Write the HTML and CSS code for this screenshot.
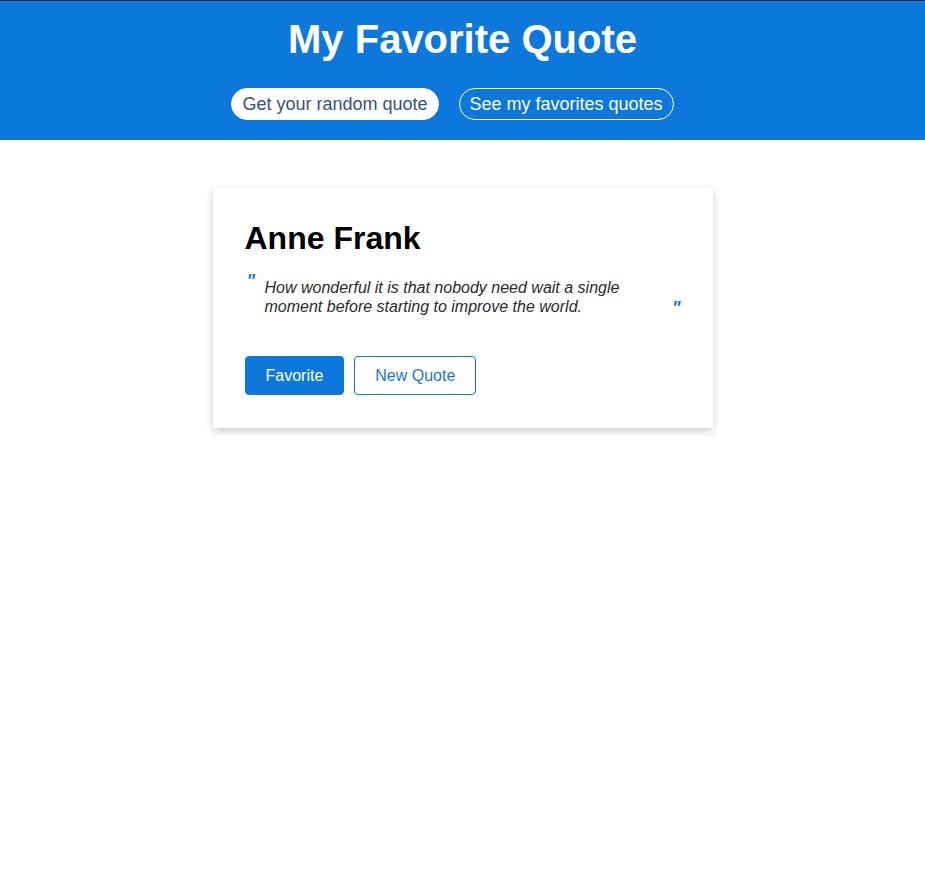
FILE: index.html
```html
<!DOCTYPE html>
<html lang="en">
<head>
<meta charset="utf-8">
<title>My Favorite Quote</title>
<link rel="stylesheet" href="styles.css">
</head>
<body>
<header class="header">
  <h1 class="title">My Favorite Quote</h1>
  <nav class="nav">
    <a class="nav-btn nav-btn-active" href="#">Get your random quote</a>
    <a class="nav-btn" href="#">See my favorites quotes</a>
  </nav>
</header>
<main class="main">
  <section class="card">
    <h2 class="author">Anne Frank</h2>
    <div class="quote">
      <span class="qmark qmark-open">"</span>
      <p class="quote-text">How wonderful it is that nobody need wait a single moment before starting to improve the world.</p>
      <span class="qmark qmark-close">"</span>
    </div>
    <div class="actions">
      <button class="btn btn-primary">Favorite</button>
      <button class="btn btn-outline">New Quote</button>
    </div>
  </section>
</main>
</body>
</html>
```
FILE: styles.css
```css
* { box-sizing: border-box; }
html, body {
  margin: 0;
  padding: 0;
  background: #ffffff;
  font-family: "Liberation Sans", Arial, sans-serif;
}
body {
  min-height: 100vh;
}
.header {
  background: #0c78dc;
  border-top: 1px solid #1f2a38;
  padding: 14px 0 20px;
  text-align: center;
}
.title {
  margin: 0;
  color: #ffffff;
  font-size: 40px;
  font-weight: 700;
  line-height: 48px;
}
.nav {
  display: flex;
  justify-content: center;
  margin-top: 25px;
}
.nav-btn {
  display: inline-block;
  margin-right: 20px;
  padding: 5px 10px;
  font-size: 18px;
  line-height: 20px;
  border: 1px solid #ffffff;
  border-radius: 16px;
  color: #ffffff;
  text-decoration: none;
}
.nav-btn-active {
  background: #ffffff;
  color: #34527e;
}
.main {
  display: flex;
  justify-content: center;
  padding: 48px 0 60px;
}
.card {
  width: 500px;
  padding: 30px 32px 33px;
  background: #ffffff;
  box-shadow: 0 3px 8px rgba(0, 0, 0, 0.2);
}
.author {
  margin: 0;
  font-size: 32px;
  font-weight: 700;
  line-height: 40px;
  color: #000000;
}
.quote {
  display: flex;
  margin-top: 14px;
}
.qmark {
  font-size: 18px;
  font-style: italic;
  font-weight: 700;
  color: #1c74d4;
  line-height: 18px;
}
.qmark-open {
  align-self: flex-start;
  width: 20px;
  padding-left: 2px;
}
.qmark-close {
  align-self: flex-end;
  margin-left: auto;
}
.quote-text {
  margin: 6px 0 1px;
  width: 400px;
  font-size: 16px;
  font-style: italic;
  line-height: 19px;
  color: #2a2a2a;
}
.actions {
  display: flex;
  gap: 10px;
  margin-top: 39px;
}
.btn {
  font-family: "Liberation Sans", Arial, sans-serif;
  font-size: 16px;
  line-height: 17px;
  padding: 10px 20px;
  border-radius: 4px;
  border: 1px solid #0c78dc;
  cursor: pointer;
}
.btn-primary {
  background: #0c78dc;
  color: #ffffff;
}
.btn-outline {
  background: #ffffff;
  color: #1c74d4;
}
```
